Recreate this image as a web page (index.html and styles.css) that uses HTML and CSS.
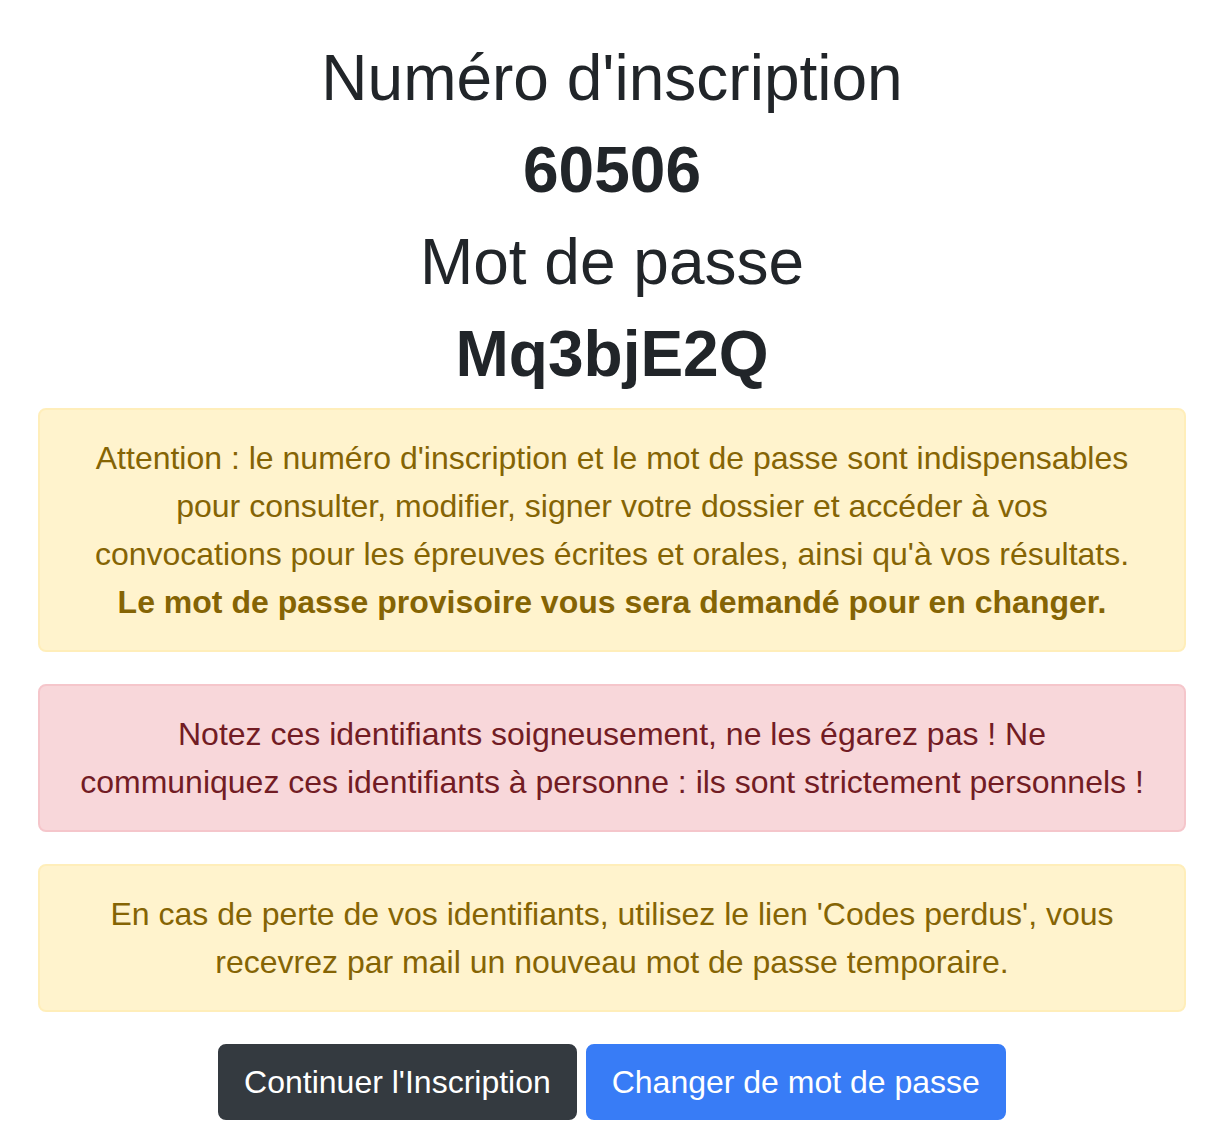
FILE: index.html
```html
<!DOCTYPE html>
<html lang="fr">
<head>
<meta charset="utf-8">
<title>Inscription</title>
<link rel="stylesheet" href="styles.css">
</head>
<body>
<div class="page">
  <h2 class="title">Numéro d'inscription</h2>
  <h2 class="title strong">60506</h2>
  <h2 class="title">Mot de passe</h2>
  <h2 class="title strong">Mq3bjE2Q</h2>

  <div class="alert alert-warning">
    Attention : le numéro d'inscription et le mot de passe sont indispensables pour consulter, modifier, signer votre dossier et accéder à vos convocations pour les épreuves écrites et orales, ainsi qu'à vos résultats.<br>
    <b>Le mot de passe provisoire vous sera demandé pour en changer.</b>
  </div>

  <div class="alert alert-danger">
    Notez ces identifiants soigneusement, ne les égarez pas ! Ne communiquez ces identifiants à personne : ils sont strictement personnels !
  </div>

  <div class="alert alert-warning">
    En cas de perte de vos identifiants, utilisez le lien 'Codes perdus', vous recevrez par mail un nouveau mot de passe temporaire.
  </div>

  <div class="actions">
    <a class="btn btn-dark" href="#">Continuer l'Inscription</a>
    <a class="btn btn-primary" href="#">Changer de mot de passe</a>
  </div>
</div>
</body>
</html>
```

FILE: styles.css
```css
html, body {
  margin: 0;
  padding: 0;
  background: #ffffff;
}

body {
  font-family: "Liberation Sans", Arial, Helvetica, sans-serif;
  color: #212529;
  font-size: 32px;
  line-height: 48px;
}

.page {
  padding: 40px 32px 0 38px;
  text-align: center;
}

.title {
  margin: 0 0 16px 0;
  font-size: 64px;
  line-height: 76px;
  font-weight: 400;
  color: #212529;
}

.title.strong {
  font-weight: 700;
}

.alert {
  border: 2px solid transparent;
  border-radius: 8px;
  padding: 24px 40px;
  margin: 0 0 32px 0;
  text-align: center;
}

.alert-warning {
  background: #fff3cd;
  border-color: #ffeeba;
  color: #856404;
}

.alert-danger {
  background: #f8d7da;
  border-color: #f5c6cb;
  color: #721c24;
}

.actions {
  text-align: center;
}

.btn {
  display: inline-block;
  padding: 12px 24px;
  border: 2px solid transparent;
  border-radius: 8px;
  font-size: 32px;
  line-height: 48px;
  color: #ffffff;
  text-decoration: none;
  vertical-align: middle;
}

.btn-dark {
  background: #343a40;
  border-color: #343a40;
}

.btn-primary {
  background: #387cf6;
  border-color: #387cf6;
}
```
